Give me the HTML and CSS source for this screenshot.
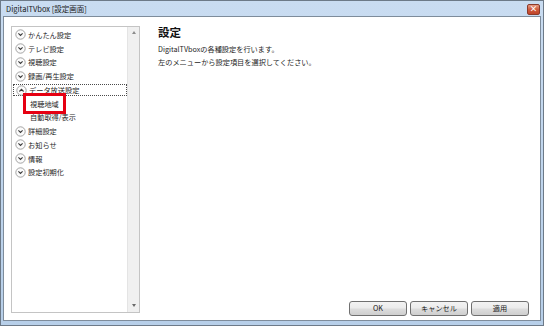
FILE: index.html
```html
<!DOCTYPE html>
<html lang="ja">
<head>
  <meta charset="UTF-8" />
  <title>DigitalTVbox [設定画面]</title>
  <link rel="stylesheet" href="styles.css">
</head>
<body>
  <div class="window">
    <div class="titlebar">
      <span class="title">DigitalTVbox [設定画面]</span>
      <span class="close-btn">×</span>
    </div>

    <div class="client">
      <!-- left menu -->
      <div class="menu">
        <ul class="menu-list">
          <li class="item"><svg class="ico" viewBox="0 0 11 11"><circle cx="5.5" cy="5.5" r="4.7"/><path d="M3.4 4.4 L5.5 6.5 L7.6 4.4"/></svg>かんたん設定</li>
          <li class="item"><svg class="ico" viewBox="0 0 11 11"><circle cx="5.5" cy="5.5" r="4.7"/><path d="M3.4 4.4 L5.5 6.5 L7.6 4.4"/></svg>テレビ設定</li>
          <li class="item"><svg class="ico" viewBox="0 0 11 11"><circle cx="5.5" cy="5.5" r="4.7"/><path d="M3.4 4.4 L5.5 6.5 L7.6 4.4"/></svg>視聴設定</li>
          <li class="item"><svg class="ico" viewBox="0 0 11 11"><circle cx="5.5" cy="5.5" r="4.7"/><path d="M3.4 4.4 L5.5 6.5 L7.6 4.4"/></svg>録画/再生設定</li>
          <li class="item open"><svg class="ico" viewBox="0 0 11 11"><circle cx="5.5" cy="5.5" r="4.7"/><path d="M3.4 6.5 L5.5 4.4 L7.6 6.5"/></svg>データ放送設定</li>
          <li class="sub"><span class="marked">視聴地域</span></li>
          <li class="sub">自動取得/表示</li>
          <li class="item"><svg class="ico" viewBox="0 0 11 11"><circle cx="5.5" cy="5.5" r="4.7"/><path d="M3.4 4.4 L5.5 6.5 L7.6 4.4"/></svg>詳細設定</li>
          <li class="item"><svg class="ico" viewBox="0 0 11 11"><circle cx="5.5" cy="5.5" r="4.7"/><path d="M3.4 4.4 L5.5 6.5 L7.6 4.4"/></svg>お知らせ</li>
          <li class="item"><svg class="ico" viewBox="0 0 11 11"><circle cx="5.5" cy="5.5" r="4.7"/><path d="M3.4 4.4 L5.5 6.5 L7.6 4.4"/></svg>情報</li>
          <li class="item"><svg class="ico" viewBox="0 0 11 11"><circle cx="5.5" cy="5.5" r="4.7"/><path d="M3.4 4.4 L5.5 6.5 L7.6 4.4"/></svg>設定初期化</li>
        </ul>
        <div class="scrollbar">
          <span class="arrow up"></span>
          <span class="arrow down"></span>
        </div>
      </div>

      <!-- right side -->
      <div class="panel">
        <div class="content">
          <h2>設定</h2>
          <p>DigitalTVboxの各種設定を行います。</p>
          <p>左のメニューから設定項目を選択してください。</p>
        </div>
        <div class="buttons">
          <button>OK</button>
          <button>キャンセル</button>
          <button>適用</button>
        </div>
      </div>
    </div>
  </div>
</body>
</html>
```

FILE: styles.css
```css
  body {
    margin: 0;
    font-family: "Noto Sans CJK JP", "Noto Sans", sans-serif;
    font-size: 7.2px;
    color: #1e1e1e;
    background: #fff;
  }
  .window {
    width: 544px;
    height: 326px;
    box-sizing: border-box;
    border: 1px solid #6d7a88;
    background: linear-gradient(#c9dcf1, #b7cfe9);
    padding: 0 2px 4px 2px;
    display: flex;
    flex-direction: column;
  }
  .titlebar {
    height: 15px;
    display: flex;
    align-items: center;
    justify-content: space-between;
    padding-left: 3px;
  }
  .title {
    font-size: 7.5px;
    color: #1a1a1a;
    line-height: 1;
  }
  .close-btn {
    width: 13px;
    height: 11px;
    margin-top: 1px;
    margin-right: 1px;
    box-sizing: border-box;
    border: 1px solid #8a3a2a;
    border-radius: 2px;
    background: linear-gradient(#e59a84, #cf5a3c 50%, #c0442a);
    color: #fff;
    font-size: 8px;
    font-weight: bold;
    line-height: 8px;
    text-align: center;
  }
  .client {
    flex: 1;
    background: #fff;
    border: 1px solid #7e8c9b;
    padding: 9px 11px 0 7px;
    display: flex;
    align-items: flex-start;
    gap: 18px;
  }

  /* menu */
  .menu {
    width: 129px;
    height: 287px;
    box-sizing: border-box;
    border: 1px solid #c4c4c4;
    display: flex;
  }
  .menu-list {
    flex: 1;
    list-style: none;
    margin: 0;
    padding: 1px 0 0 0;
  }
  .menu-list li {
    height: 13.75px;
    display: flex;
    align-items: center;
    white-space: nowrap;
    box-sizing: border-box;
  }
  .item {
    padding-left: 3px;
  }
  .item.open {
    border: 1px dotted #4a4a4a;
    padding-left: 2px;
    margin-left: 1px;
    height: 12px !important;
    margin-top: 1px;
    margin-bottom: 0.75px;
  }
  .ico {
    width: 11px;
    height: 11px;
    margin-right: 2px;
    flex: none;
  }
  .ico circle {
    fill: #fbfbfb;
    stroke: #8e8e8e;
    stroke-width: 0.8;
  }
  .ico path {
    fill: none;
    stroke: #3a3a3a;
    stroke-width: 1.1;
  }
  .sub {
    padding-left: 18px;
  }
  .marked {
    position: relative;
  }
  .marked::after {
    content: "";
    position: absolute;
    left: -7px;
    right: -7px;
    top: -6px;
    bottom: -5px;
    border: 3px solid #e60012;
  }
  .scrollbar {
    width: 11px;
    background: #f0f0f0;
    border-left: 1px solid #e4e4e4;
    display: flex;
    flex-direction: column;
    justify-content: space-between;
    align-items: center;
    padding: 4px 0 5px;
  }
  .arrow {
    width: 0;
    height: 0;
    border-left: 2.5px solid transparent;
    border-right: 2.5px solid transparent;
  }
  .arrow.up {
    border-bottom: 3px solid #8c8c8c;
  }
  .arrow.down {
    border-top: 3px solid #6a6a6a;
  }

  /* right panel */
  .panel {
    flex: 1;
    height: 290px;
    display: flex;
    flex-direction: column;
  }
  .content h2 {
    font-size: 11.5px;
    font-weight: bold;
    margin: 0 0 4px;
    line-height: 13px;
    color: #111;
  }
  .content p {
    margin: 0;
    line-height: 13px;
  }
  .buttons {
    margin-top: auto;
    display: flex;
    justify-content: flex-end;
    gap: 3px;
  }
  button {
    width: 58px;
    height: 15px;
    border: 1px solid #707070;
    border-radius: 3px;
    background: linear-gradient(#f3f3f3, #ebebeb 48%, #dddddd 52%, #cfcfcf);
    font-family: "Noto Sans CJK JP", "Noto Sans", sans-serif;
    font-size: 7.2px;
    color: #1a1a1a;
    padding: 0;
    line-height: 13px;
  }
```
